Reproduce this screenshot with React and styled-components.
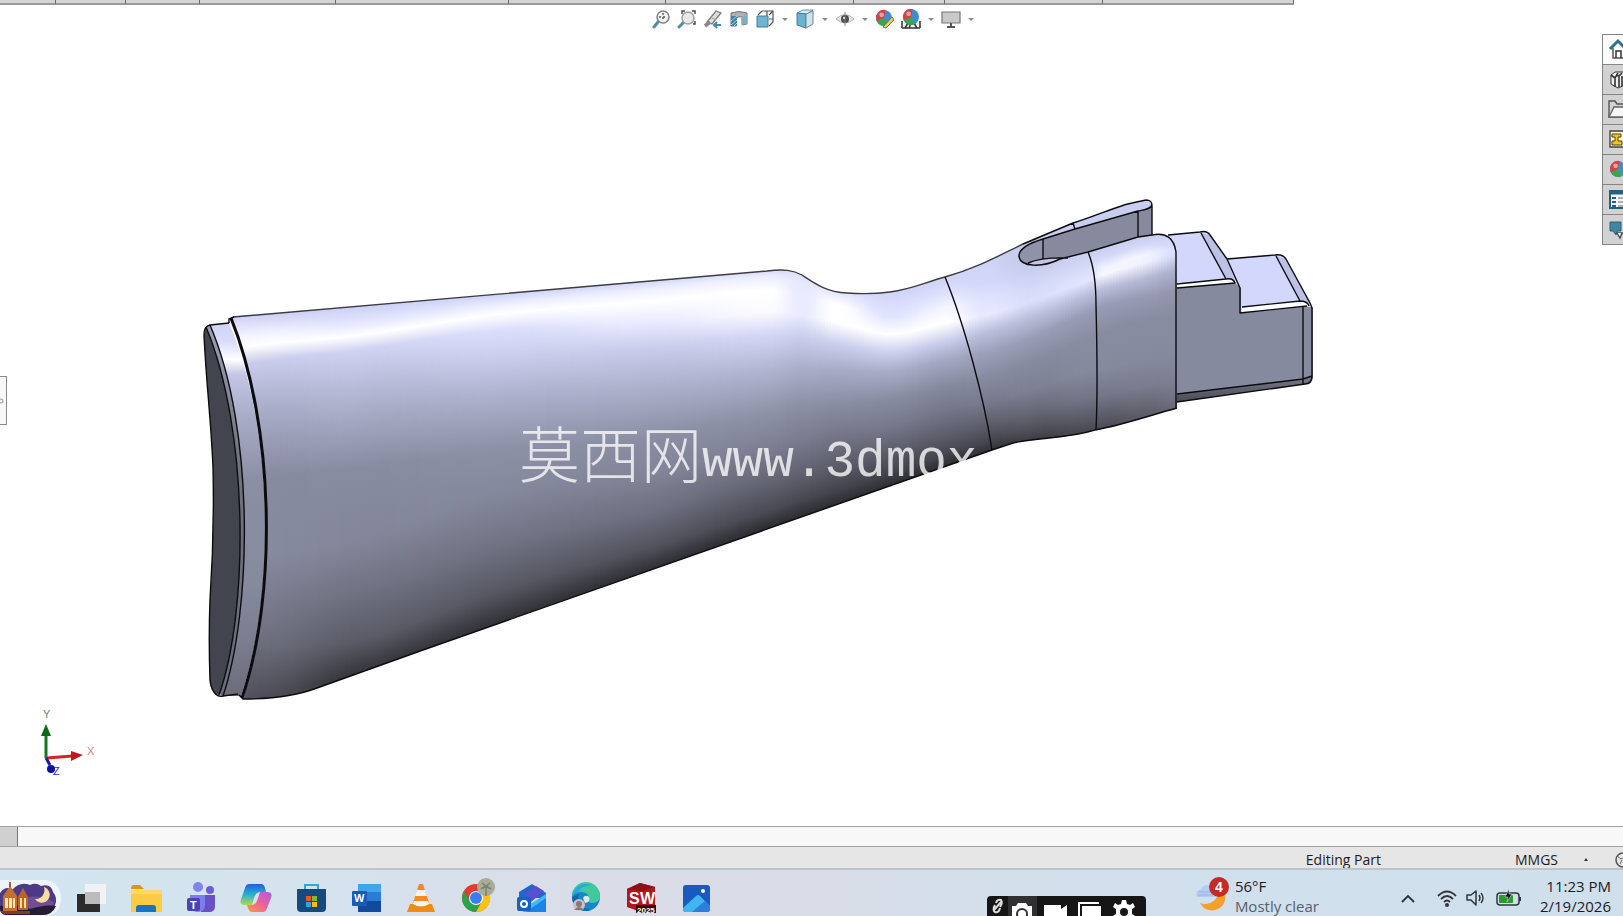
import React from "react";
import styled, { createGlobalStyle } from "styled-components";

const GlobalStyle = createGlobalStyle`
  *, *::before, *::after { box-sizing: border-box; }
  html, body { margin: 0; padding: 0; overflow: hidden; }
  body { font-family: "Open Sans", "Noto Sans", "Noto Sans CJK SC", sans-serif; color: #1c1c1e; background: #fff; }
  button { font: inherit; color: inherit; border: 0; padding: 0; background: none; cursor: pointer; }
`;

const Screen = styled.div`
  min-height: 100vh;
  display: flex;
  flex-direction: column;
`;

const TabStrip = styled.div`
  display: flex;
  height: 5px;
`;
const TabStub = styled.div`
  flex: ${(p) => p.$w} 0 0;
  background: #d4d4d4;
  border-right: 1px solid #6a6a6a;
  border-bottom: 2px solid #9b9b9b;
`;
const TabRest = styled.div`
  flex: 329 0 0;
`;

const Viewport = styled.main`
  position: relative;
  flex: 1;
  display: flex;
  align-items: flex-start;
  overflow: hidden;
`;
const Scene = styled.svg`
  position: absolute;
  inset: 0;
  width: 100%;
  height: 100%;
`;
const Handle = styled.button`
  position: relative;
  align-self: center;
  display: flex;
  align-items: center;
  width: 7px;
  height: 49px;
  margin-bottom: 30px;
  background: #f8f8f8;
  border: 1px solid #8a8a8a;
  border-left: 0;
`;
const ViewBar = styled.nav`
  position: relative;
  flex: 1;
  display: flex;
  justify-content: center;
  padding: 2px 0 0 17px;
`;
const ViewButton = styled.button`
  width: ${(p) => (p.$arrow ? 14 : 26)}px;
  height: 24px;
  display: grid;
  place-items: center;
`;
const TaskPane = styled.aside`
  position: relative;
  width: 21px;
  margin-top: 29px;
  border: 1px solid #858585;
  border-width: 1px 0 0 1px;
`;
const PaneTab = styled.button`
  display: flex;
  align-items: center;
  width: 100%;
  height: 30px;
  padding: 0 0 2px 5px;
  overflow: hidden;
  background: ${(p) => (p.$active ? "#fbfbfb" : "#d2d2d2")};
  border-bottom: 1px solid #858585;
  svg { flex: none; }
`;

const ModelTabs = styled.div`
  display: flex;
  height: 21px;
  background: #f8f8f8;
  border: solid #a2a2a2;
  border-width: 1px 0;
`;
const ModelTabStub = styled.div`
  width: 18px;
  background: #d0d0d0;
  border-right: 1px solid #777;
`;
const StatusBar = styled.footer`
  display: flex;
  justify-content: flex-end;
  align-items: center;
  height: 23px;
  padding-top: 4px;
  background: #e6e6e6;
  border-bottom: 2px solid #bcc5cb;
  font-size: 14px;
  line-height: 20px;
  overflow: hidden;
`;
const StatusText = styled.span`
  white-space: nowrap;
`;
const Units = styled.button`
  display: flex;
  align-items: center;
  gap: 25px;
  margin: 0 25px 0 134px;
`;
const Clip = styled.div`
  width: 9px;
  overflow: hidden;
  display: flex;
  svg { flex: none; }
`;

const Taskbar = styled.footer`
  display: flex;
  height: 46px;
  overflow: hidden;
  background: linear-gradient(90deg, #d2e5f0 0, #d5e3ee 18%, #dadde7 36%, #d9dde7 50%, #d1e0ec 66%, #d0dfec 100%);
`;
const SearchArt = styled.button`
  width: 63px;
  height: 46px;
  display: flex;
  align-items: flex-start;
`;
const AppButton = styled.button`
  width: 55px;
  height: 46px;
  display: grid;
  justify-content: center;
  align-content: start;
  padding-top: 8px;
`;
const Recorder = styled.div`
  display: flex;
  width: 159px;
  height: 20px;
  margin: 26px 49px 0 auto;
  background: #161617;
  border-radius: 4px 4px 0 0;
  padding: 0 4px 0 1px;
`;
const RecButton = styled.button`
  width: ${(p) => p.$w}px;
  height: 20px;
  display: flex;
  justify-content: center;
  background: ${(p) => (p.$active ? "#303032" : "transparent")};
  overflow: hidden;
  svg { flex: none; }
`;
const Weather = styled.button`
  display: flex;
  gap: 6px;
  text-align: left;
  align-items: flex-start;
`;
const TwoLines = styled.span`
  display: flex;
  flex-direction: column;
  padding-top: 6px;
  font-size: 15px;
  line-height: 20px;
  white-space: nowrap;
  text-align: ${(p) => p.$align || "left"};
`;
const Muted = styled.span`
  color: #55606b;
`;
const Tray = styled.div`
  display: flex;
  align-items: flex-start;
  padding: 17px 18px 0 81px;
  svg { display: block; }
`;
const TrayButton = styled.button`
  width: ${(p) => p.$w}px;
  height: 24px;
`;
const Clock = styled.button`
  display: flex;
  align-items: flex-start;
  margin-right: 12px;
`;

/* Shading of the stock: for each x, the colour along y from top edge to bottom edge. */
const COLUMNS = [
  [222, [[317, "#cfd2f4"], [338, "#f4f5ff"], [352, "#ffffff"], [367, "#c6c9e8"], [400, "#aeb1cd"], [440, "#999cb5"], [480, "#888ca1"], [560, "#868a9f"], [610, "#7c7e91"], [650, "#70717f"], [700, "#60616c"]]],
  [260, [[316, "#cfd2f4"], [334, "#f2f3ff"], [345, "#ffffff"], [362, "#c8cbea"], [400, "#b0b3d0"], [440, "#9a9db6"], [478, "#878b9f"], [555, "#868a9f"], [600, "#7a7c8e"], [645, "#6c6d7b"], [698, "#4c4d56"]]],
  [360, [[307, "#cdd1f5"], [325, "#e9ebff"], [335, "#ffffff"], [350, "#cfd2f2"], [375, "#bfc2e0"], [415, "#a7aac4"], [468, "#888ca1"], [540, "#83869a"], [590, "#717282"], [640, "#5a5b66"], [672, "#36373c"]]],
  [500, [[294, "#cfd3f6"], [304, "#ebedff"], [314, "#ffffff"], [330, "#dcdffb"], [355, "#cbceee"], [395, "#aeb1cd"], [450, "#8c90a5"], [490, "#85899d"], [540, "#737586"], [590, "#575863"], [624, "#303135"]]],
  [640, [[281, "#d0d4f6"], [290, "#eceeff"], [302, "#ffffff"], [325, "#e6e8ff"], [350, "#c8cbea"], [390, "#acafca"], [440, "#8a8ea3"], [475, "#828598"], [515, "#6e6f80"], [550, "#52535d"], [574, "#2e2f33"]]],
  [770, [[270, "#d8dbfa"], [277, "#eceeff"], [290, "#ffffff"], [312, "#fafaff"], [335, "#d3d6f5"], [370, "#b1b4d0"], [412, "#8e92a7"], [445, "#7d8093"], [480, "#656674"], [510, "#494a54"], [528, "#2b2c2f"]]],
  [802, [[273, "#dcdffc"], [283, "#e6e8ff"], [297, "#e8eaff"], [315, "#e9ebff"], [338, "#c9ccec"], [370, "#a9acc8"], [407, "#8b8fa4"], [440, "#797b8e"], [475, "#5f606d"], [500, "#46474f"], [517, "#2b2c2f"]]],
  [835, [[286, "#d8dbfa"], [294, "#e9ebff"], [304, "#ffffff"], [322, "#ffffff"], [343, "#ccd0ef"], [370, "#a8abc7"], [405, "#898da2"], [435, "#757789"], [465, "#5c5d69"], [490, "#43444d"], [506, "#2b2c2f"]]],
  [890, [[291, "#cfd3f5"], [303, "#d8dbfb"], [318, "#e3e5ff"], [334, "#ffffff"], [352, "#cdd0ef"], [372, "#a8abc6"], [400, "#878b9f"], [425, "#777a8d"], [450, "#5e5f6c"], [472, "#43444d"], [487, "#2b2c2f"]]],
  [945, [[277, "#cfd3f5"], [292, "#dcdffc"], [308, "#f4f5ff"], [323, "#ffffff"], [342, "#c8cbea"], [360, "#a5a8c2"], [386, "#868a9e"], [410, "#75778a"], [435, "#5d5e6b"], [454, "#44454f"], [467, "#2b2c2f"]]],
  [985, [[262, "#cfd3f5"], [282, "#d3d7f8"], [299, "#e0e3fd"], [315, "#e8eaff"], [333, "#bbbedb"], [353, "#9da0b9"], [378, "#878b9f"], [402, "#777a8d"], [425, "#5d5e6b"], [442, "#44454e"], [453, "#303136"]]],
  [1030, [[262, "#c5c9ea"], [275, "#cdd1f3"], [288, "#d5d8f8"], [302, "#dcdffb"], [318, "#bbbedb"], [338, "#9a9db6"], [362, "#878b9f"], [390, "#7d8093"], [412, "#676875"], [428, "#51525c"], [441, "#3b3c42"]]],
  [1088, [[250, "#c9cdee"], [260, "#d0d4f5"], [270, "#dadefa"], [280, "#e2e5ff"], [295, "#babdda"], [313, "#989bb4"], [340, "#888ca1"], [370, "#858a9d"], [398, "#737587"], [418, "#595a66"], [433, "#44454e"]]],
  [1104, [[246, "#c9cdee"], [257, "#d5d8f8"], [267, "#f0f2ff"], [274, "#f8f8ff"], [288, "#bcbfdc"], [306, "#989bb4"], [332, "#888ca1"], [368, "#858a9d"], [395, "#757789"], [414, "#5d5e6a"], [430, "#484952"]]],
  [1140, [[237, "#c9cdee"], [246, "#d5d8f8"], [256, "#f4f5ff"], [264, "#f0f2ff"], [280, "#b6b9d5"], [298, "#979ab2"], [322, "#888ca1"], [360, "#868a9e"], [388, "#797b8e"], [404, "#686976"], [420, "#55565f"]]],
  [1180, [[236, "#cfd3f5"], [243, "#d5d9fb"], [249, "#dadefc"], [255, "#d3d7f7"], [268, "#afb2cd"], [290, "#9396ad"], [315, "#888ca1"], [355, "#868a9e"], [380, "#7c7f92"], [395, "#737587"], [409, "#666774"]]],
];

const hex = (c) => [1, 3, 5].map((i) => parseInt(c.slice(i, i + 2), 16));
const mix = (a, b, t) => a + (b - a) * t;

const slope = (i, k) => {
  const a = COLUMNS[Math.max(0, i - 1)];
  const b = COLUMNS[Math.min(COLUMNS.length - 1, i + 1)];
  return (b[1][k][0] - a[1][k][0]) / (b[0] - a[0]);
};

function stopsAt(x) {
  let i = 0;
  while (i < COLUMNS.length - 2 && COLUMNS[i + 1][0] < x) i += 1;
  const [x0, a] = COLUMNS[i];
  const [x1, b] = COLUMNS[i + 1];
  const h = x1 - x0;
  const t = Math.min(1, Math.max(0, (x - x0) / h));
  const t2 = t * t;
  const t3 = t2 * t;
  let last = 0;
  return a.map(([y, c], k) => {
    const ca = hex(c);
    const cb = hex(b[k][1]);
    const smooth =
      (2 * t3 - 3 * t2 + 1) * y + (t3 - 2 * t2 + t) * h * slope(i, k) +
      (3 * t2 - 2 * t3) * b[k][0] + (t3 - t2) * h * slope(i + 1, k);
    last = Math.max(smooth, last + 1);
    const e = 3 * t2 - 2 * t3;
    return { y: last, color: `rgb(${ca.map((v, j) => Math.round(mix(v, cb[j], e))).join(",")})` };
  });
}

const STRIP = 3;
const strips = [];
for (let x = 225; x < 1179; x += STRIP) strips.push({ x, stops: stopsAt(x + 1) });

const BODY =
  "M229 319 L233 317 L767 271 C784 269 793 270 802 275 C814 283 826 292 847 293 C862 294 875 294 890 292 C912 289 926 282 945 277 C975 269 998 256 1023 244 L1073 223 L1132 203 L1152 230 L1152 235 C1166 232 1174 238 1176 252 L1177 283 L1177 408 C1148 416 1122 425 1095 430 C1066 439 1040 437 1013 443 L992 450 L423 650 L317 688 C296 696 270 699 243 699 C277 592 273 425 229 319 Z";

function Model() {
  const line = { fill: "none", stroke: "#0c0c10", strokeWidth: 1.4, strokeLinejoin: "round" };
  return (
    <g>
      <defs>
        <clipPath id="body"><path d={BODY} /></clipPath>
        {strips.map((s) => {
          const y0 = s.stops[0].y;
          const y1 = s.stops[s.stops.length - 1].y;
          return (
            <linearGradient key={s.x} id={`s${s.x}`} gradientUnits="userSpaceOnUse" x1="0" x2="0" y1={y0} y2={y1}>
              {s.stops.map((p, k) => <stop key={k} offset={(p.y - y0) / (y1 - y0)} stopColor={p.color} />)}
            </linearGradient>
          );
        })}
        <linearGradient id="rim" gradientUnits="userSpaceOnUse" x1="0" x2="0" y1="322" y2="697">
          <stop offset="0" stopColor="#cfd3f4" /><stop offset=".05" stopColor="#d8dbfa" /><stop offset=".1" stopColor="#fff" />
          <stop offset=".14" stopColor="#c3c6e4" /><stop offset=".25" stopColor="#aaadc8" /><stop offset=".42" stopColor="#8b8fa4" />
          <stop offset=".7" stopColor="#858a9d" /><stop offset=".85" stopColor="#7b7d90" /><stop offset="1" stopColor="#6b6c7a" />
        </linearGradient>
        <linearGradient id="bevel" x1="0" x2="0" y1="0" y2="1">
          <stop offset="0" stopColor="#9a9eb4" /><stop offset=".35" stopColor="#70737f" /><stop offset="1" stopColor="#6a6c7a" />
        </linearGradient>
        <linearGradient id="under" x1="0" x2="0" y1="0" y2="1">
          <stop offset="0" stopColor="#777a8c" /><stop offset="1" stopColor="#4b4c56" />
        </linearGradient>
      </defs>

      {/* recoil pad */}
      <path d="M210 325 L229 323 C273 425 277 592 241 696 L223 696 C252 610 255 430 210 325 Z" fill="url(#rim)" />
      <path d="M210 325 C255 430 252 610 223 696 L219 694 C249 610 249 430 206 328 Z" fill="url(#bevel)" />
      <path d="M206 327 C249 430 249 610 219 695 C213 694 210 688 210 680 C209 650 209 625 210 600 C213 555 214 510 213 467 C211 420 206 380 204 335 Z" fill="#43454e" />
      <path {...line} d="M229 323 L210 325 C206 326 204 329 204 335 C206 380 211 420 213 467 C214 510 213 555 210 600 C209 625 209 650 210 680 C211 690 216 698 223 696 L238 694" />
      <path {...line} d="M206 327 C249 430 249 610 219 695 M210 325 C255 430 252 610 223 696" />

      {/* stock */}
      <g clipPath="url(#body)">
        {strips.map((s) => (
          <rect key={s.x} x={s.x} y="190" width={STRIP + 1} height="520" fill={`url(#s${s.x})`} shapeRendering="crispEdges" />
        ))}
      </g>
      <path {...line} stroke="#3c3c42" d="M233 317 L767 271 C784 269 793 270 802 275 C814 283 826 292 847 293 C862 294 875 294 890 292 C912 289 926 282 945 277 C975 269 998 256 1023 244" />
      <path {...line} d="M1177 408 C1148 416 1122 425 1095 430 C1066 439 1040 437 1013 443 L992 450 L423 650 L317 688 C296 696 270 699 243 699 L239 695" />
      <path {...line} strokeWidth="3" d="M231 318 C274 425 278 592 242 698" />
      <path {...line} d="M229 323 L229 319 L234 317" />
      <path {...line} d="M945 277 C964 323 984 398 992 450 M1088 252 C1094 266 1096 283 1096 305 C1097 345 1098 390 1096 430" />

      {/* tang slot */}
      <path d="M1019 257 C1018 248 1033 240 1043 236 L1073 223 C1096 216 1120 205 1132 203 L1146 200 C1151 200 1152 202 1152 206 L1152 235 L1138 237 L1088 252 L1060 259 C1040 268 1020 266 1019 257 Z" fill="#878a9f" />
      <path d="M1019 257 C1020 247 1036 241 1043 239 L1043 259 L1028 264 Z" fill="#8f93aa" />
      <path d="M1020 252 C1024 244 1036 240 1043 236 L1073 223 C1096 216 1120 205 1132 203 L1146 200 C1151 200 1152 202 1151 206 C1149 209 1144 210 1138 211 L1075 229 L1043 239 C1033 242 1024 247 1020 252 Z" fill="#c9cdf0" />
      <path d="M1028 263 Q1042 257 1068 258 Q1046 270 1028 263 Z" fill="#c2c6e4" />
      <path {...line} d="M1019 257 C1018 248 1033 242 1043 239 L1075 229 L1138 211 C1144 210 1152 209 1152 204 M1023 244 L1073 223 C1096 216 1120 205 1132 203 L1146 200 C1151 200 1152 202 1152 206 L1152 235 M1019 257 C1021 267 1042 268 1060 259 L1088 252 L1138 237 L1152 235 M1043 239 V259 M1138 211 V237 M1073 223 L1075 229 M1028 263 Q1042 257 1068 258" />

      {/* tenon */}
      <path d="M1168 235 L1200 232 C1204 231 1208 232 1210 235 L1227 259 L1241 288 L1177 288 L1176 252 Z" fill="#d3d7fb" />
      <path d="M1227 259 L1275 255 C1280 254 1284 256 1286 259 L1310 301 L1310 308 L1241 313 L1241 288 Z" fill="#d3d7fb" />
      <path d="M1177 288 L1235 283 L1241 288 L1241 313 L1304 307 L1313 307 L1313 377 C1312 382 1309 384 1305 384 L1177 402 Z" fill="#868a9e" />
      <path d="M1177 394 L1303 379 L1313 376 C1312 382 1309 384 1305 384 L1177 402 Z" fill="url(#under)" />
      <path d="M1201 233 L1226 279 L1235 281 L1227 259 L1210 235 Z M1276 256 L1300 301 L1310 303 L1286 259 Z" fill="#bdc1e3" />
      <path d="M1177 284 L1226 279 C1231 278 1234 280 1235 283 L1177 288 Z M1242 307 L1300 301 C1305 301 1308 303 1309 306 L1242 312 Z" fill="#fff" />
      <path {...line} d="M1168 235 L1200 232 C1204 231 1208 232 1210 235 L1227 259 L1240 288 V313 L1307 306 M1227 259 L1275 255 C1280 254 1284 256 1286 259 L1310 303 L1312 308 V376 C1312 382 1309 384 1305 384 L1177 402 M1201 233 L1226 279 M1276 256 L1300 301 M1177 284 L1226 279 C1231 278 1234 280 1235 283 L1177 288 M1242 307 L1300 301 C1305 301 1308 303 1309 306 M1303 307 V384 M1177 394 L1303 379 L1312 376" />
      <path {...line} d="M1152 235 C1166 232 1174 238 1176 252 L1176 283 V408" />
    </g>
  );
}

function Triad() {
  return (
    <g fontFamily="Liberation Sans, Arial, sans-serif" fontSize="11">
      <path d="M46 758 V733" stroke="#127a1a" strokeWidth="3" />
      <path d="M46 724 L41 736 H51 Z" fill="#0d6b15" />
      <path d="M47 758 L72 756" stroke="#d3222a" strokeWidth="3" />
      <path d="M83 755 L71 751 V761 Z" fill="#c5161d" />
      <path d="M46 758 L50 765" stroke="#1a1ab0" strokeWidth="3" />
      <circle cx="51" cy="769" r="4" fill="#10109a" />
      <text x="43" y="718" fill="#5f8f5f">Y</text>
      <text x="87" y="755" fill="#d87a7e">X</text>
      <text x="53" y="775" fill="#2b2bd6">Z</text>
    </g>
  );
}

const Svg = ({ s = 20, children, ...rest }) => (
  <svg width={s} height={s} viewBox={`0 0 ${s} ${s}`} fill="none" aria-hidden="true" {...rest}>{children}</svg>
);

const handleStroke = { stroke: "#4e8da6", strokeWidth: 3, strokeLinecap: "round" };
function Ball({ cx = 9, cy = 9, r = 7 }) {
  return (
    <g>
      <circle cx={cx} cy={cy} r={r} fill="#3f8fd0" />
      <path d={`M${cx} ${cy} L${cx - r * 0.9} ${cy + r * 0.4} A${r} ${r} 0 0 1 ${cx + r * 0.2} ${cy - r} Z`} fill="#d94040" />
      <path d={`M${cx} ${cy} L${cx - r * 0.9} ${cy + r * 0.4} A${r} ${r} 0 0 0 ${cx + r * 0.5} ${cy + r * 0.86} Z`} fill="#3aa64a" />
      <circle cx={cx - r * 0.3} cy={cy - r * 0.4} r={r * 0.3} fill="#fff" opacity=".5" />
    </g>
  );
}

const viewTools = [
  ["Zoom to fit", <Svg><path d="M3 18 L7 13" {...handleStroke} /><circle cx="12" cy="8" r="6" fill="#f3f3f3" stroke="#808080" strokeWidth="1.5" /><path d="M12 4v8M8 8h8" stroke="#555" strokeWidth="1.4" strokeDasharray="2 2" /></Svg>],
  ["Zoom to area", <Svg><path d="M2 18 L6 14" {...handleStroke} /><path d="M5 5V2h3M15 2h3v3M18 12v3h-2" stroke="#444" strokeWidth="1.4" /><circle cx="11" cy="9" r="6" fill="#e9e9e9" stroke="#a0a0a0" strokeWidth="1.5" /></Svg>],
  ["Previous view", <Svg><path d="M4 13 L13 2 L18 4 L9 15 Z" fill="#dcdcdc" stroke="#777" strokeWidth="1.2" /><path d="M9 9L13 11" stroke="#999" /><path d="M2 17 L7 13" stroke="#8a8a8a" strokeWidth="4" /><path d="M18 16H11M14 13l-3 3 3 3" stroke="#4488ad" strokeWidth="2" /></Svg>],
  ["Section view", <Svg><path d="M2 4 Q10 1 18 4 V15 L13 16 V8 Q10 7 7 9 V17 L2 17 Z" fill="#aeb2b7" stroke="#6f7276" /><path d="M2 7h6v10H2z" fill="#3f84a8" /><path d="M2 12l6-5M2 16l6-5M5 17l3-3" stroke="#a9d1e4" /><path d="M13 8l5-3v10l-5 1z" fill="#84aabd" /></Svg>],
  ["View orientation", <Svg><path d="M7 2H18V13L14 17M7 2L3 6M18 2L14 6M12 2v5M14 10h4" stroke="#555" strokeWidth="1.2" /><path d="M2 7H13V18H2Z" fill="#6fb4d3" stroke="#3e7f9f" /></Svg>, true],
  ["Display style", <Svg><path d="M2 4L8 1H18L12 5Z" fill="#d6edf6" stroke="#5c9ab5" /><path d="M2 4L11 5V19L2 16Z" fill="#6db2cf" stroke="#3e7f9f" /><path d="M11 5L18 2V15L11 19Z" fill="#cfe3eb" stroke="#6c8793" /></Svg>, true],
  ["Hide or show items", <Svg><path d="M1 10 Q10 1 19 10 Q10 18 1 10Z" fill="#e6e6e6" stroke="#b3b3b3" /><circle cx="10" cy="10" r="4" fill="#4d4d4d" /><path d="M10 3v14" stroke="#888" /><circle cx="9" cy="9" r="1" fill="#fff" /></Svg>, true],
  ["Edit appearance", <Svg><Ball cx={9} cy={9} r={8} /><path d="M8 18L17 8L19 11L11 19Z" fill="#e8cf55" stroke="#7c7040" /></Svg>],
  ["Apply scene", <Svg><path d="M1 19V12H19V19Z" fill="#f2f2f2" /><path d="M1 19V12M19 19V12M4 19l3-5M8 19l2-5M16 19l-3-5M1 19H19" stroke="#333" strokeWidth="1.5" /><Ball cx={10} cy={8} r={8} /></Svg>, true],
  ["View settings", <Svg><path d="M1 3H19V14H1Z" fill="#c9c9c9" stroke="#777" strokeWidth="1.2" /><path d="M10 14v3M6 18h8" stroke="#555" strokeWidth="2" /></Svg>, true],
];

const paneTools = [
  ["Home", <Svg s={24}><path d="M5 11V21H19V11" fill="#fff" stroke="#555" strokeWidth="1.5" /><path d="M2 12L10 4L18 12" stroke="#2b708f" strokeWidth="3" /><path d="M8 21V14H13V21" stroke="#333" strokeWidth="1.5" /></Svg>],
  ["Design library", <Svg s={24}><path d="M3 8L7 5H20L17 9V18L10 21L3 17Z" fill="#f1f1f1" stroke="#333" /><path d="M3 8L7 11V20M7 11L10 6M11 9V20M8 8L11 9L14 6M14 9V19" stroke="#333" strokeWidth="1.6" /></Svg>],
  ["File explorer", <Svg s={24}><path d="M1 20V4H7L9 7H21V20Z" fill="#d2d2d2" stroke="#555" strokeWidth="1.4" /><path d="M1 20L6 10H24V20Z" fill="#f6f6f6" stroke="#666" strokeWidth="1.4" /></Svg>],
  ["View palette", <Svg s={24}><path d="M2 4H22V20H2Z" fill="#fff8dc" stroke="#444" strokeWidth="1.4" /><path d="M4 7H13V10H10V14H14V18H4V14H7V10H4Z" fill="#f2c51d" stroke="#4d4210" /></Svg>],
  ["Appearances", <Svg s={24}><Ball cx={10} cy={12} r={8} /></Svg>],
  ["Custom properties", <Svg s={24}><path d="M2 4H22V21H2Z" fill="#f3f6f8" stroke="#27607c" strokeWidth="2" /><path d="M2 6H22" stroke="#27607c" strokeWidth="3" /><path d="M4 11H8M4 15H8M4 19H8" stroke="#27607c" strokeWidth="2" /><path d="M10 11H20M10 15H20M10 19H20" stroke="#666" /></Svg>],
  ["Forum", <Svg s={24}><path d="M2 5H13V14H9L8 18L5 14H2Z" fill="#3f86a5" stroke="#2a607a" /><path d="M9 16H20V8" stroke="#666" strokeWidth="2" /><path d="M9 16L12 21L14 16" fill="#fff" stroke="#444" strokeWidth="1.4" /></Svg>],
];

const label = { fontFamily: "Liberation Sans, Arial, sans-serif", fontWeight: 700, fill: "#fff" };
const App32 = ({ children }) => <svg width="40" height="36" viewBox="0 0 40 36" fill="none" aria-hidden="true">{children}</svg>;
const apps = [
  ["Task view", <App32><path d="M6 16H29V34H6Z" fill="#2c2c2d" /><path d="M14 6H35V26H14Z" fill="#f4f4f4" opacity=".85" /><path d="M14 14H29V26H14Z" fill="#bcbcbc" /></App32>],
  ["File Explorer", <App32><path d="M5 10Q5 7 8 7H14L18 11H5Z" fill="#d69a12" /><path d="M5 12H36V34H5Z" fill="#fbcb45" /><path d="M5 12H36V16H5Z" fill="#fdd866" /><path d="M10 30Q10 27 13 27H27Q30 27 30 30V34H10Z" fill="#1a72c0" /></App32>],
  ["Teams", <App32><circle cx="17" cy="9" r="5" fill="#7f85f0" /><circle cx="29" cy="12" r="4" fill="#6a5ed8" /><path d="M22 17H34V28Q34 34 28 34H20Z" fill="#6a4fc9" /><path d="M9 17H24V27Q24 34 17 34Q9 34 9 27Z" fill="#7d7df0" /><rect x="6" y="20" width="13" height="13" rx="2" fill="#4b43b5" /><text x="9" y="31" fontSize="11" {...label}>T</text></App32>],
  ["Copilot", <App32><defs><linearGradient id="ca" x1="0" y1="0" x2="0" y2="1"><stop stopColor="#1e63d8" /><stop offset=".5" stopColor="#27b0d4" /><stop offset="1" stopColor="#b7d84a" /></linearGradient><linearGradient id="cb" x1="1" y1="0" x2="0" y2="1"><stop stopColor="#a75be8" /><stop offset=".5" stopColor="#f0609a" /><stop offset="1" stopColor="#f8a13c" /></linearGradient></defs><path d="M13 6H25Q28 6 29 10L30 14H24Q20 14 18 20L16 27H9Q3 27 5 21L9 10Q10 6 13 6Z" fill="url(#ca)" /><path d="M27 34H16Q13 34 12 30L11 27H16Q20 27 22 20L24 14H31Q37 14 35 20L31 30Q30 34 27 34Z" fill="url(#cb)" /></App32>],
  ["Microsoft Store", <App32><path d="M14 11V7H27V11" stroke="#35a5dc" strokeWidth="2" /><path d="M6 11H35V30Q35 34 31 34H10Q6 34 6 30Z" fill="#174a7c" /><path d="M15 18H20V23H15Z" fill="#f05323" /><path d="M21 18H26V23H21Z" fill="#80bb2b" /><path d="M15 24H20V29H15Z" fill="#2ba5e8" /><path d="M21 24H26V29H21Z" fill="#fcb914" /></App32>],
  ["Word", <App32><path d="M12 6H35V15H12Z" fill="#41a5ee" /><path d="M12 14H35V24H12Z" fill="#2b7cd3" /><path d="M12 23H35V34H12Z" fill="#134b9c" /><rect x="6" y="13" width="15" height="15" rx="1" fill="#185abd" /><text x="8" y="24" fontSize="11" {...label}>W</text></App32>],
  ["VLC", <App32><path d="M18 6H22L29 28H11Z" fill="#f68a1c" /><path d="M16 12H24L26 18H14ZM13 23H27L29 28H11Z" fill="#f3f3f3" /><path d="M9 26H12Q20 31 28 26H31L34 34H6Z" fill="#f18a12" /></App32>],
  ["Chrome", <App32><circle cx="20" cy="20" r="14" fill="#e23b30" /><path d="M8 13A14 14 0 0 0 20 34L26 23L13 22Z" fill="#2ba24c" /><path d="M20 34A14 14 0 0 0 33 14H21L26 23Z" fill="#fbc116" /><circle cx="20" cy="20" r="7" fill="#fff" /><circle cx="20" cy="20" r="6" fill="#3a7df0" /><circle cx="30" cy="9" r="9" fill="#a9ad97" /><path d="M30 18V8M30 8L25 11M30 8L35 11M30 8L26 5M30 8L34 5" stroke="#77836a" strokeWidth="1.5" /></App32>],
  ["Outlook", <App32><path d="M8 14L21 6L35 15V20H8Z" fill="#2564cf" /><path d="M14 16L25 8L33 13L20 24Z" fill="#5a4fd0" /><path d="M10 20L21 25L35 16V34H12Z" fill="#3fb8f5" /><path d="M15 34L35 20V34Z" fill="#1a84e6" /><rect x="6" y="19" width="14" height="14" rx="2" fill="#1463c0" /><circle cx="13" cy="26" r="3" stroke="#fff" strokeWidth="2" /></App32>],
  ["Edge", <App32><circle cx="20" cy="19" r="14" fill="#1587cc" /><path d="M6 18A14 14 0 0 1 34 18Q34 25 26 25Q21 25 23 20Q22 14 15 14Q9 14 6 18Z" fill="#3fc9a0" /><path d="M6 18A14 14 0 0 1 25 7Q14 8 12 15Q8 15 6 18Z" fill="#2aa7dc" /><path d="M23 19Q25 24 19 25L17 20Q19 16 23 19Z" fill="#e4eaf1" /><path d="M13 16Q9 29 25 32Q20 34 15 32Q6 27 6 19Z" fill="#1267b0" /><circle cx="13" cy="27" r="6" fill="#c9c4c2" /><circle cx="13" cy="26" r="3" fill="#8a7672" /><path d="M8 32Q13 26 18 32Z" fill="#8a7672" /></App32>],
  ["SolidWorks 2025", <App32><path d="M6 11L19 5L34 9V27L20 34L6 29Z" fill="#b3161c" /><path d="M6 11L19 5L34 9L20 13Z" fill="#8e0f15" /><path d="M15 27H35V35H15Z" fill="#33090b" /><text x="8" y="26" fontSize="16" {...label}>S</text><text x="19" y="26" fontSize="16" {...label}>W</text><text x="16" y="35" fontSize="8" {...label}>2025</text></App32>],
  ["Photos", <App32><rect x="7" y="7" width="27" height="27" rx="3" fill="#185abd" /><path d="M7 30L20 18Q22 16 24 18L34 28V31Q34 34 31 34H10Q7 34 7 31Z" fill="#41b5ef" /><path d="M16 34L29 23L34 28V31Q34 34 31 34Z" fill="#2a7fdd" /><circle cx="27" cy="13" r="2" fill="#fff" /></App32>],
];

const tabWidths = [55, 69, 73, 135, 172, 156, 187, 90, 157, 190];

export default function App() {
  return (
    <Screen>
      <GlobalStyle />
      <TabStrip>
        {tabWidths.map((w, i) => <TabStub key={i} $w={w} />)}
        <TabRest />
      </TabStrip>

      <Viewport>
        <Scene viewBox="0 5 1623 821" role="img" aria-label="Shaded model of a stock">
          <Model />
          <text x="519" y="478" fill="#fff" opacity=".78">
            <tspan fontFamily="Noto Sans CJK SC, sans-serif" fontSize="61" fontWeight="300">莫西网</tspan>
            <tspan fontFamily="Liberation Mono, monospace" fontSize="51" y="476">www.3dmox</tspan>
          </text>
          <Triad />
        </Scene>
        <Handle aria-label="Expand feature tree"><Svg s={6}><circle cx="1" cy="3" r="2" stroke="#999" /></Svg></Handle>
        <ViewBar aria-label="View tools">
          {viewTools.map(([name, icon, menu]) => (
            <React.Fragment key={name}>
              <ViewButton aria-label={name}>{icon}</ViewButton>
              {menu && <ViewButton $arrow aria-label={`${name} menu`}><Svg s={6}><path d="M0 2H6L3 5Z" fill="#8a8a8a" /></Svg></ViewButton>}
            </React.Fragment>
          ))}
        </ViewBar>
        <TaskPane>
          {paneTools.map(([name, icon], i) => <PaneTab key={name} $active={i === 0} aria-label={name}>{icon}</PaneTab>)}
        </TaskPane>
      </Viewport>

      <ModelTabs><ModelTabStub /></ModelTabs>
      <StatusBar>
        <StatusText>Editing Part</StatusText>
        <Units>MMGS<Svg s={6}><path d="M1 4H5L3 1Z" fill="#333" /></Svg></Units>
        <Clip><Svg s={16}><circle cx="9" cy="8" r="7" stroke="#555" strokeWidth="1.5" /><path d="M3 4L7 7L12 5M6 12L8 8" stroke="#666" /></Svg></Clip>
      </StatusBar>

      <Taskbar>
        <SearchArt aria-label="Search highlights">
          <svg width="62" height="46" viewBox="0 0 62 46" aria-hidden="true">
            <path d="M0 10H44Q61 11 61 29Q60 46 44 46H0Z" fill="#eef5fa" />
            <path d="M0 23Q6 15 12 20Q20 11 30 15Q36 12 41 16Q51 13 53 22Q58 28 55 35Q52 46 40 45H6Q0 44 0 38Z" fill="#4c3a86" />
            <path d="M20 30Q36 22 54 32Q52 40 30 40Z" fill="#8a5a9c" opacity=".6" />
            <path d="M0 36Q20 34 30 39Q45 34 56 36Q52 46 40 45H6Q0 44 0 38Z" fill="#251c36" />
            <path d="M44 17A8 8 0 1 1 35 29A9 9 0 0 0 44 17Z" fill="#f8dca0" />
            <path d="M3 26L10 16L17 26V41H3Z" fill="#c3702e" /><path d="M10 12V17" stroke="#a5612b" strokeWidth="2" />
            <path d="M5 28H8V38H5ZM9 28H12V38H9ZM13 28H15V38H13Z" fill="#ffe9b0" />
            <path d="M18 27L23 18L28 27V40H18Z" fill="#b8652c" /><path d="M20 28H22V38H20ZM24 28H26V38H24Z" fill="#ffdf9a" />
            <path d="M0 41H30V44H4Z" fill="#7c3f22" />
          </svg>
        </SearchArt>
        {apps.map(([name, icon]) => <AppButton key={name} aria-label={name}>{icon}</AppButton>)}

        <Recorder>
          <RecButton $w={20} aria-label="Link"><Svg><path d="M6 14L13 6M7 9Q4 14 7 16Q11 17 12 12M8 7Q9 3 13 4Q15 7 12 11" stroke="#ddd" strokeWidth="2" /></Svg></RecButton>
          <RecButton $w={29} $active aria-label="Screenshot"><Svg s={24}><path d="M2 10H6L8 7H16L18 10H22V24H2Z" fill="#fff" /><circle cx="12" cy="18" r="5" stroke="#303032" strokeWidth="2" /></Svg></RecButton>
          <RecButton $w={37} aria-label="Record video"><Svg s={24}><path d="M1 9H18V13L24 9V24H1Z" fill="#fff" /></Svg></RecButton>
          <RecButton $w={33} aria-label="Gallery"><Svg s={24}><path d="M1 20V7H21" stroke="#fff" strokeWidth="2" /><path d="M4 10H23V24H4Z" fill="#fff" /></Svg></RecButton>
          <RecButton $w={35} aria-label="Settings"><Svg s={24}><path d="M10 4H14L15 8L18 9L21 7L23 11L20 13V18L23 20L21 24H3L1 20L4 18V13L1 11L3 7L6 9L9 8Z" fill="#fff" /><circle cx="12" cy="16" r="4" fill="#161617" /></Svg></RecButton>
        </Recorder>

        <Weather>
          <svg width="34" height="46" viewBox="0 0 34 46" aria-hidden="true">
            <path d="M2 27Q0 20 6 19Q9 13 16 16L20 27Z" fill="#b5cdf2" /><path d="M4 22H17M3 25H18" stroke="#94b2e2" />
            <path d="M24 19A14 14 0 0 1 5 33A13 13 0 1 0 29 21Z" fill="#f5a02c" />
            <circle cx="24" cy="17" r="10" fill="#c42b24" />
            <text x="24" y="22" fontSize="14" textAnchor="middle" {...label}>4</text>
          </svg>
          <TwoLines><span>56°F</span><Muted>Mostly clear</Muted></TwoLines>
        </Weather>
        <Tray>
          <TrayButton $w={37} aria-label="Show hidden icons"><Svg s={16}><path d="M2 11L8 5L14 11" stroke="#2c3338" strokeWidth="1.8" /></Svg></TrayButton>
          <TrayButton $w={29} aria-label="Network"><Svg><path d="M1 7Q10 -2 19 7M4 10Q10 4 16 10M7 13Q10 10 13 13" stroke="#30363b" strokeWidth="1.8" /><circle cx="10" cy="16" r="2" fill="#30363b" /></Svg></TrayButton>
          <TrayButton $w={30} aria-label="Volume"><Svg><path d="M1 6H5L10 2V16L5 11H1Z" stroke="#30363b" strokeWidth="1.5" strokeLinejoin="round" /><path d="M13 6Q15 9 13 12M15 4Q19 9 15 14" stroke="#30363b" strokeWidth="1.4" /></Svg></TrayButton>
          <TrayButton $w={26} aria-label="Battery"><svg width="26" height="20" viewBox="0 0 26 20" fill="none" aria-hidden="true"><rect x="1" y="4" width="22" height="12" rx="3" stroke="#30363b" strokeWidth="1.5" /><rect x="3" y="6" width="14" height="8" rx="1" fill="#2a9a28" /><path d="M24 8V12" stroke="#30363b" strokeWidth="2" /><path d="M13 0L9 8H12L11 13L16 5H13Z" fill="#111" stroke="#d0dfec" strokeWidth=".6" /></svg></TrayButton>
        </Tray>
        <Clock><TwoLines $align="right"><span>11:23 PM</span><span>2/19/2026</span></TwoLines></Clock>
      </Taskbar>
    </Screen>
  );
}
